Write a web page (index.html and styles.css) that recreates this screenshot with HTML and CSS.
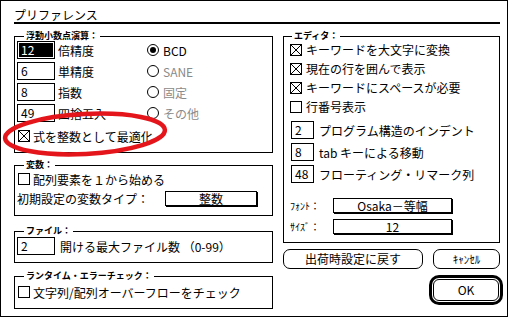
FILE: index.html
```html
<!DOCTYPE html>
<html lang="ja">
<head>
  <meta charset="UTF-8" />
  <title>プリファレンス</title>
  <link rel="stylesheet" href="styles.css">
</head>
<body>
  <div class="window">
    <div class="title">プリファレンス</div>

    <div class="panes">
      <div class="left">
        <fieldset class="group g-float">
          <legend>浮動小数点演算：</legend>
          <div class="num-rows">
            <div class="num-row">
              <span class="field sel"><span>12</span></span>
              <span class="num-label">倍精度</span>
              <svg class="radio" viewBox="0 0 12 12"><circle cx="6" cy="6" r="5.5"/><circle class="dot" cx="6" cy="6" r="3"/></svg>
              <span>BCD</span>
            </div>
            <div class="num-row">
              <span class="field">6</span>
              <span class="num-label">単精度</span>
              <svg class="radio" viewBox="0 0 12 12"><circle cx="6" cy="6" r="5.5"/></svg>
              <span class="dim">SANE</span>
            </div>
            <div class="num-row">
              <span class="field">8</span>
              <span class="num-label">指数</span>
              <svg class="radio" viewBox="0 0 12 12"><circle cx="6" cy="6" r="5.5"/></svg>
              <span class="dim">固定</span>
            </div>
            <div class="num-row">
              <span class="field">49</span>
              <span class="num-label">四捨五入</span>
              <svg class="radio" viewBox="0 0 12 12"><circle cx="6" cy="6" r="5.5"/></svg>
              <span class="dim">その他</span>
            </div>
          </div>
          <div class="check-row opt-row">
            <svg class="box" viewBox="0 0 12 12"><rect x="0.5" y="0.5" width="11" height="11"/><path d="M1 1L11 11M11 1L1 11"/></svg>
            <span>式を整数として最適化</span>
          </div>
        </fieldset>

        <fieldset class="group g-vars">
          <legend>変数：</legend>
          <div class="check-row">
            <svg class="box" viewBox="0 0 12 12"><rect x="0.5" y="0.5" width="11" height="11"/></svg>
            <span>配列要素を１から始める</span>
          </div>
          <div class="popup-row type-row">
            <span class="type-label">初期設定の変数タイプ：</span>
            <span class="popup type-popup">整数</span>
          </div>
        </fieldset>

        <fieldset class="group g-file">
          <legend>ファイル：</legend>
          <div class="num-row file-row">
            <span class="field">2</span>
            <span>開ける最大ファイル数 （0-99）</span>
          </div>
        </fieldset>

        <fieldset class="group g-run">
          <legend>ランタイム・エラーチェック：</legend>
          <div class="check-row">
            <svg class="box" viewBox="0 0 12 12"><rect x="0.5" y="0.5" width="11" height="11"/></svg>
            <span>文字列/配列オーバーフローをチェック</span>
          </div>
        </fieldset>
      </div>

      <div class="right">
        <fieldset class="group g-editor">
          <legend>エディタ：</legend>
          <div class="ed-checks">
            <div class="ed-check">
              <svg class="box" viewBox="0 0 12 12"><rect x="0.5" y="0.5" width="11" height="11"/><path d="M1 1L11 11M11 1L1 11"/></svg>
              <span>キーワードを大文字に変換</span>
            </div>
            <div class="ed-check">
              <svg class="box" viewBox="0 0 12 12"><rect x="0.5" y="0.5" width="11" height="11"/><path d="M1 1L11 11M11 1L1 11"/></svg>
              <span>現在の行を囲んで表示</span>
            </div>
            <div class="ed-check">
              <svg class="box" viewBox="0 0 12 12"><rect x="0.5" y="0.5" width="11" height="11"/><path d="M1 1L11 11M11 1L1 11"/></svg>
              <span>キーワードにスペースが必要</span>
            </div>
            <div class="ed-check">
              <svg class="box" viewBox="0 0 12 12"><rect x="0.5" y="0.5" width="11" height="11"/></svg>
              <span>行番号表示</span>
            </div>
          </div>
          <div class="ed-nums">
            <div class="ed-num"><span class="field small">2</span><span>プログラム構造のインデント</span></div>
            <div class="ed-num"><span class="field small">8</span><span>tab キーによる移動</span></div>
            <div class="ed-num"><span class="field small">48</span><span>フローティング・リマーク列</span></div>
          </div>
          <div class="popup-row font-row">
            <span class="tiny-label">ﾌｫﾝﾄ：</span>
            <span class="popup wide-popup">Osaka－等幅</span>
          </div>
          <div class="popup-row size-row">
            <span class="tiny-label">ｻｲｽﾞ：</span>
            <span class="popup wide-popup">12</span>
          </div>
        </fieldset>

        <div class="buttons">
          <button class="btn reset-btn">出荷時設定に戻す</button>
          <button class="btn cancel-btn">ｷｬﾝｾﾙ</button>
        </div>
        <button class="btn ok-btn">OK</button>
      </div>
    </div>
  </div>

  <svg class="mark" width="509" height="318" viewBox="0 0 509 318">
    <ellipse cx="85" cy="134" rx="80" ry="20" transform="rotate(-3 85 134)"/>
  </svg>
</body>
</html>
```

FILE: styles.css
```css
body {
  margin: 0;
  background: #fff;
  color: #000;
  font-family: "Noto Sans CJK JP", "Noto Sans", sans-serif;
  font-size: 12px;
}
.window {
  box-sizing: border-box;
  width: 508px;
  height: 317px;
  border: 1px solid #000;
  padding: 6px 7px 0 13px;
}
.title {
  height: 15px;
  line-height: 15px;
  border-bottom: 2px solid #000;
}
.panes {
  display: flex;
  gap: 10px;
  margin-top: 7px;
}
.left {
  width: 259px;
  display: flex;
  flex-direction: column;
}
.right {
  width: 217px;
  display: flex;
  flex-direction: column;
}

/* group boxes */
.group {
  box-sizing: border-box;
  margin: 0;
  padding: 0 2px;
  border: 1px solid #000;
  min-width: 0;
}
.group legend {
  font-size: 9px;
  font-weight: bold;
  line-height: 10px;
  padding: 0 2px;
  margin-left: 7px;
}
.g-float { height: 122px; }
.g-vars { height: 56px; margin-top: 7px; }
.g-file { height: 37px; margin-top: 10px; }
.g-run { height: 38px; margin-top: 8px; }

/* number fields */
.field {
  box-sizing: border-box;
  display: block;
  flex: none;
  width: 38px;
  height: 18px;
  border: 1px solid #000;
  padding-left: 3px;
  line-height: 16px;
}
.field.sel {
  padding: 1px;
}
.field.sel span {
  display: block;
  height: 14px;
  line-height: 14px;
  padding-left: 2px;
  background: #000;
  color: #fff;
}
.field.small {
  width: 23px;
  margin-left: 1px;
}
.num-rows {
  display: flex;
  flex-direction: column;
  gap: 3px;
}
.num-row {
  display: flex;
  align-items: center;
  height: 18px;
}
.num-row .field {
  margin-right: 3px;
}
.num-label {
  width: 89px;
}
.radio {
  width: 12px;
  height: 12px;
  margin-right: 4px;
  fill: none;
  stroke: #000;
}
.radio .dot {
  fill: #000;
  stroke: none;
}
.dim {
  color: #8a8a8a;
}
.file-row {
  margin-top: 1px;
}
.file-row .field {
  margin-right: 5px;
}

/* checkboxes */
.box {
  flex: none;
  width: 12px;
  height: 12px;
  fill: none;
  stroke: #000;
}
.check-row {
  display: flex;
  align-items: center;
  gap: 3px;
  height: 14px;
  margin-top: 2px;
  padding-left: 1px;
}
.opt-row { margin-top: 7px; }
.g-run .check-row { margin-top: 4px; }

/* popups */
.popup-row {
  display: flex;
  align-items: center;
  height: 16px;
}
.type-row { margin-top: 4px; }
.type-label { width: 148px; }
.popup {
  box-sizing: border-box;
  display: block;
  height: 15px;
  line-height: 13px;
  border: 1px solid #000;
  box-shadow: 1px 1px 0 #000;
  text-align: center;
}
.type-popup { width: 92px; }
.wide-popup { width: 119px; }

/* editor */
.g-editor {
  height: 212px;
  padding: 0 6px;
}
.g-editor legend {
  margin-left: 2px;
}
.ed-checks {
  margin-top: -1px;
}
.ed-check {
  display: flex;
  align-items: center;
  gap: 4px;
  height: 19px;
}
.ed-nums {
  display: flex;
  flex-direction: column;
  gap: 4px;
  margin-top: 5px;
}
.ed-num {
  display: flex;
  align-items: center;
  gap: 5px;
  height: 18px;
}
.font-row { margin-top: 14px; }
.size-row { margin-top: 5px; }
.tiny-label {
  width: 43px;
  font-size: 10px;
}

/* buttons */
.btn {
  box-sizing: border-box;
  margin: 0;
  padding: 0;
  border: 1px solid #000;
  border-radius: 7px;
  background: #fff;
  color: #000;
  font-family: inherit;
  font-size: 12px;
  line-height: 18px;
}
.buttons {
  display: flex;
  gap: 10px;
  margin-top: 6px;
}
.reset-btn { width: 140px; height: 20px; }
.cancel-btn { width: 67px; height: 20px; font-size: 11px; }
.ok-btn {
  align-self: flex-end;
  width: 66px;
  height: 22px;
  margin-top: 10px;
  margin-right: 1px;
  border-radius: 6px;
  box-shadow: 0 0 0 1px #fff, 0 0 0 4px #000;
}

/* red annotation ring */
.mark {
  position: absolute;
  top: 0;
  left: 0;
  pointer-events: none;
}
.mark ellipse {
  fill: none;
  stroke: #e4161b;
  stroke-width: 4.5;
}
```
